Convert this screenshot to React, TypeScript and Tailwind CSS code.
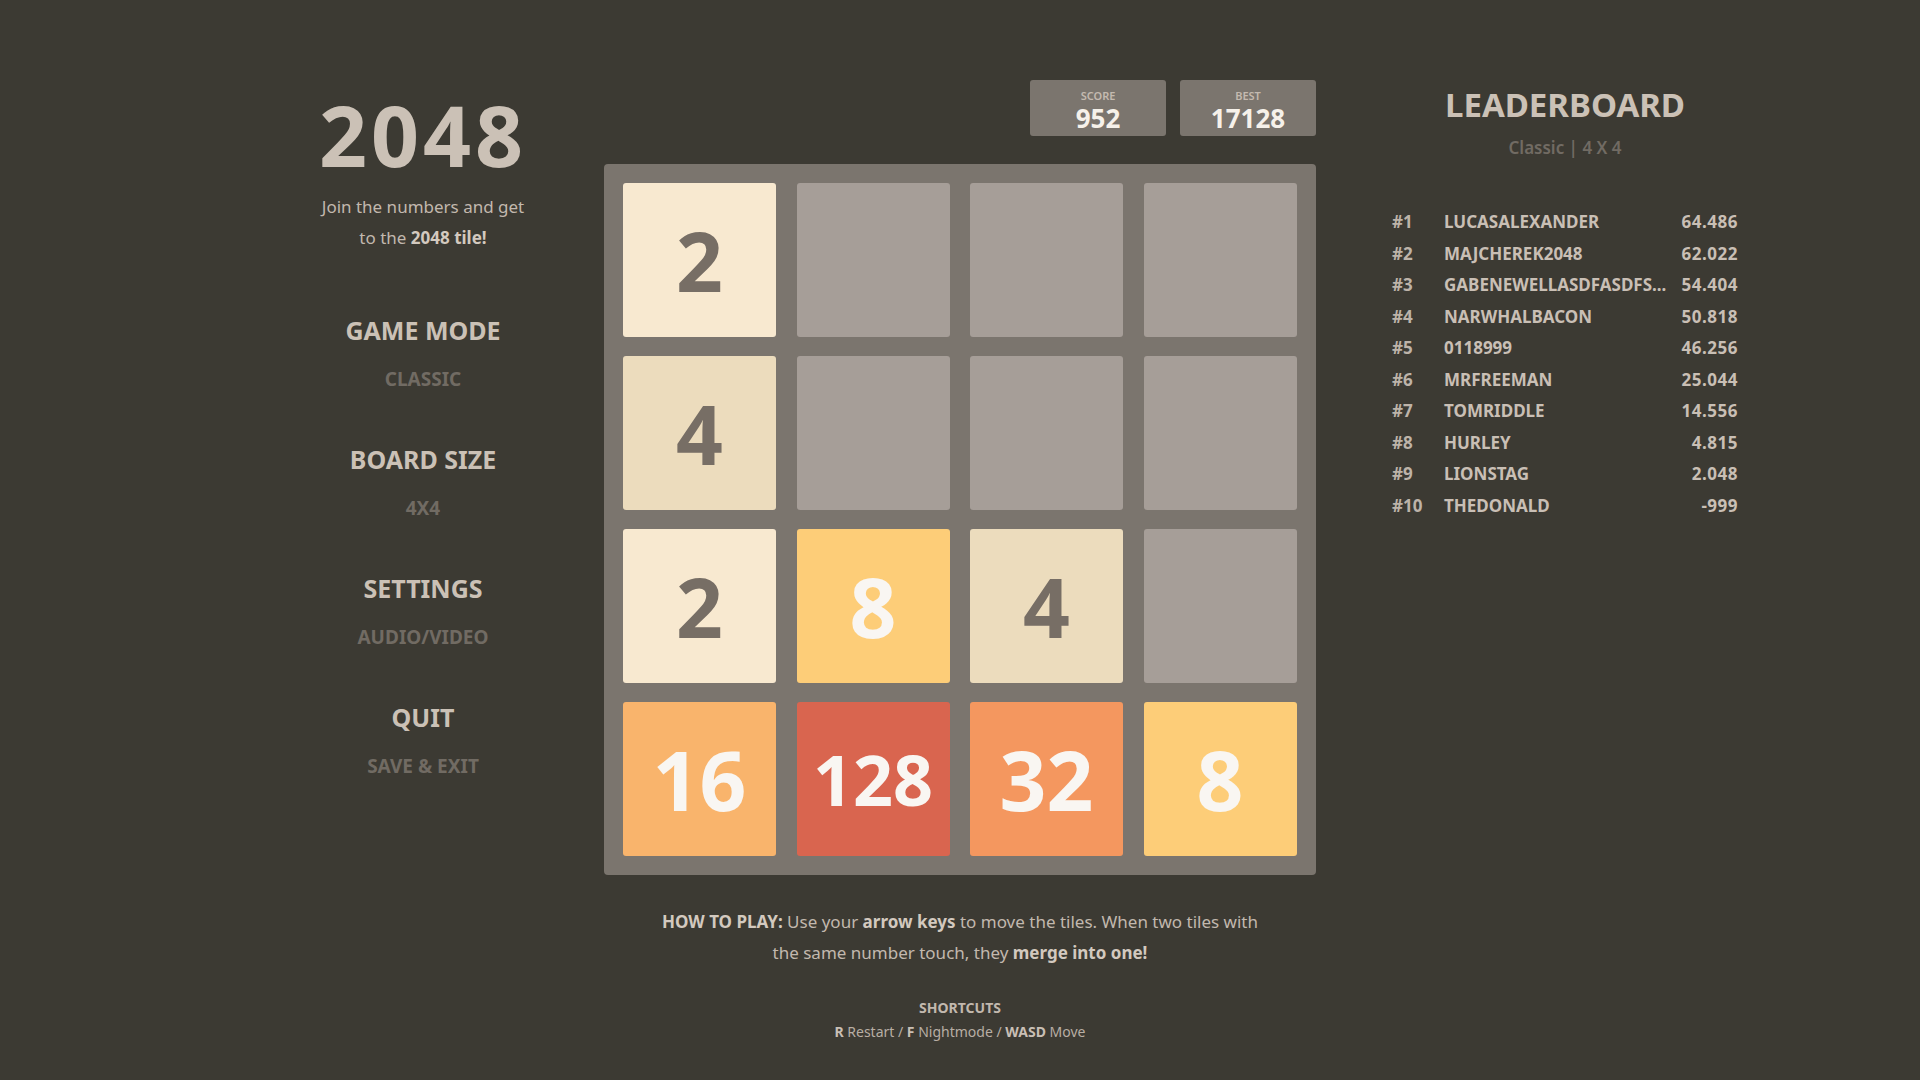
import type { ReactNode } from 'react';

const FONT = { fontFamily: '"Noto Sans", "Open Sans", sans-serif' };

type Tile = { v: number | null };

const BOARD: (number | null)[][] = [
  [2, null, null, null],
  [4, null, null, null],
  [2, 8, 4, null],
  [16, 128, 32, 8],
];

const TILE_STYLE: Record<number, string> = {
  2: 'bg-[#f8e9d0] text-[#776e65]',
  4: 'bg-[#ecdcbd] text-[#776e65]',
  8: 'bg-[#fdcd78] text-[#f9f6f2]',
  16: 'bg-[#f9b46c] text-[#f9f6f2]',
  32: 'bg-[#f4975f] text-[#f9f6f2]',
  128: 'bg-[#d9654f] text-[#f9f6f2]',
};

const LEADERS: [string, string][] = [
  ['LUCASALEXANDER', '64.486'],
  ['MAJCHEREK2048', '62.022'],
  ['GABENEWELLASDFASDFS...', '54.404'],
  ['NARWHALBACON', '50.818'],
  ['0118999', '46.256'],
  ['MRFREEMAN', '25.044'],
  ['TOMRIDDLE', '14.556'],
  ['HURLEY', '4.815'],
  ['LIONSTAG', '2.048'],
  ['THEDONALD', '-999'],
];

function MenuItem({ title, sub }: { title: string; sub: string }) {
  return (
    <div className="flex h-[129px] flex-col items-center">
      <p className="text-[25px] leading-[34px] font-bold text-[#cbc1b6]">{title}</p>
      <p className="mt-[20px] text-[19px] leading-[24px] font-bold text-[#716b63]">{sub}</p>
    </div>
  );
}

function ScoreBox({ label, value }: { label: string; value: ReactNode }) {
  return (
    <div className="flex h-[56px] w-[136px] flex-col items-center rounded-[3px] bg-[#7b756e] pt-[10px]">
      <p className="text-[11px] leading-[12px] font-semibold text-[#c4bab0]">{label}</p>
      <p className="mt-[1px] text-[26px] leading-[30px] font-bold text-[#f6f1ea]">{value}</p>
    </div>
  );
}

function Cell({ v }: Tile) {
  if (v === null) return <div className="h-[154px] w-[153px] rounded-[3px] bg-[#a69e98]" />;
  const size = v >= 100 ? 'text-[70px]' : 'text-[82px]';
  return (
    <div
      className={`grid h-[154px] w-[153px] place-items-center rounded-[3px] font-bold ${size} ${TILE_STYLE[v]}`}
    >
      <span className="leading-none">{v}</span>
    </div>
  );
}

export default function App() {
  return (
    <div className="h-[1080px] w-full overflow-hidden bg-[#3c3a33]" style={FONT}>
      <div className="flex pl-[318px]">
        {/* left column */}
        <div className="flex w-[210px] flex-col items-center pt-[85px]">
          <h1 className="text-[84px] leading-[100px] font-bold tracking-[4px] text-[#cbc1b6]">2048</h1>
          <p className="mt-[6px] text-center text-[17px] leading-[31px] text-[#c2b8ae]">
            Join the numbers and get
            <br />
            to the <b className="font-bold text-[#d3c9bf]">2048 tile!</b>
          </p>
          <div className="mt-[60px] flex flex-col">
            <MenuItem title="GAME MODE" sub="CLASSIC" />
            <MenuItem title="BOARD SIZE" sub="4X4" />
            <MenuItem title="SETTINGS" sub="AUDIO/VIDEO" />
            <MenuItem title="QUIT" sub="SAVE &amp; EXIT" />
          </div>
        </div>

        {/* game */}
        <div className="ml-[76px] flex w-[712px] flex-col pt-[80px]">
          <div className="flex justify-end gap-[14px]">
            <ScoreBox label="SCORE" value="952" />
            <ScoreBox label="BEST" value="17128" />
          </div>
          <div className="mt-[28px] grid grid-cols-4 gap-x-[20px] gap-y-[19px] rounded-[4px] bg-[#7b756e] p-[19px]">
            {BOARD.flat().map((v, i) => (
              <Cell key={i} v={v} />
            ))}
          </div>
          <p className="mt-[32px] text-center text-[17px] leading-[30.5px] text-[#c2b8ae]">
            <b className="font-bold text-[#d3c9bf]">HOW TO PLAY:</b> Use your{' '}
            <b className="font-bold text-[#d3c9bf]">arrow keys</b> to move the tiles. When two tiles with
            <br />
            the same number touch, they <b className="font-bold text-[#d3c9bf]">merge into one!</b>
          </p>
          <p className="mt-[31px] text-center text-[14px] leading-[18px] font-bold text-[#c2b8ae]">
            SHORTCUTS
          </p>
          <p className="mt-[5px] text-center text-[14px] leading-[20px] text-[#b8aea4]">
            <b className="font-bold text-[#c9bfb5]">R</b> Restart / <b className="font-bold text-[#c9bfb5]">F</b>{' '}
            Nightmode / <b className="font-bold text-[#c9bfb5]">WASD</b> Move
          </p>
        </div>

        {/* leaderboard */}
        <div className="ml-[76px] flex w-[346px] flex-col pt-[83px]">
          <h2 className="text-center text-[33px] leading-[44px] font-bold text-[#cbc1b6]">LEADERBOARD</h2>
          <p className="mt-[9px] text-center text-[17px] leading-[24px] font-semibold text-[#716b63]">
            Classic | 4 X 4
          </p>
          <div className="mt-[46px] flex flex-col">
            {LEADERS.map(([name, score], i) => (
              <div key={name} className="flex h-[31.5px] items-center text-[17px] font-bold text-[#c9bfb5]">
                <span className="w-[52px] text-[#bdb3a9]">#{i + 1}</span>
                <span className="flex-1">{name}</span>
                <span className="text-right tracking-[0.5px]">{score}</span>
              </div>
            ))}
          </div>
        </div>
      </div>
    </div>
  );
}
